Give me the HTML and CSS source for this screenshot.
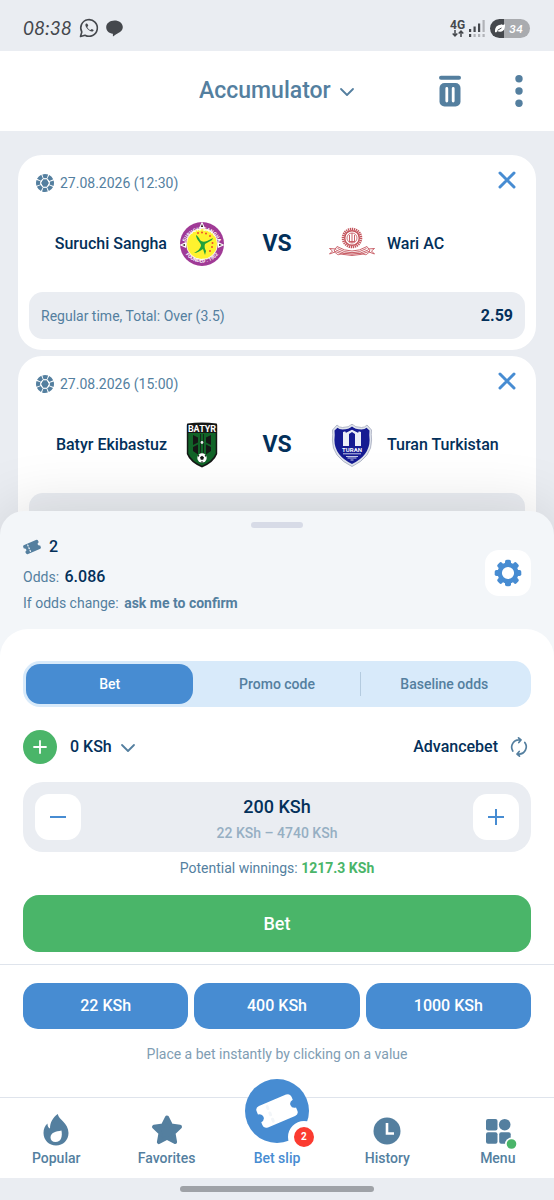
FILE: index.html
```
<!doctype html>
<html lang="en">
<head>
  <meta charset="utf-8">
  <meta name="viewport" content="width=device-width, initial-scale=1">
  <title>Bet slip</title>
  <link rel="stylesheet" href="styles.css">
</head>
<body>

  <!-- shared icons -->
  <svg class="sprite" aria-hidden="true">
    <symbol id="chevron" viewBox="0 0 16 16">
      <path d="M2 5l6 6 6-6" fill="none" stroke="currentColor" stroke-width="1.800" stroke-linecap="round" stroke-linejoin="round"/>
    </symbol>
    <symbol id="close" viewBox="0 0 18 18">
      <path d="M2 2l14 14M16 2L2 16" fill="none" stroke="currentColor" stroke-width="3" stroke-linecap="round"/>
    </symbol>
    <symbol id="ball" viewBox="0 0 18 18">
      <circle cx="9" cy="9" r="6.900" fill="none" stroke="currentColor" stroke-width="4.200" stroke-dasharray="4.500 .919" stroke-dashoffset="2.250"/>
      <path d="M7 4.800h4L13.400 9 11 13.200H7L4.600 9z" fill="currentColor" stroke="#fff" stroke-width="1"/>
    </symbol>
    <symbol id="ticket" viewBox="0 0 40 32">
      <g transform="rotate(-23 20 16)">
        <path fill="currentColor" d="M6 5h28q4 0 4 4v3q-4 .5-4 4t4 4v3q0 4-4 4H6q-4 0-4-4v-3q4-.5 4-4t-4-4V9q0-4 4-4z"/>
        <path class="perforation" d="M13 8.500v2M13 15v2M13 21.500v2" fill="none" stroke-width="2.800" stroke-linecap="round"/>
      </g>
    </symbol>
  </svg>

  <div class="status-bar">
    <div class="status-left">
      <time class="clock">08:38</time>
      <svg width="20" height="20" viewBox="0 0 20 20" fill="none" stroke="currentColor">
        <path d="M1.500 18.500l1.300-4.500a8.300 8.300 0 1 1 3.200 3.200z" stroke-width="1.600" stroke-linejoin="round"/>
        <path d="M6.800 5.800c-2.300 2.300 4.800 9.800 7.500 7.200.7-.8.4-1.300-1.600-2.100l-1.200 1.200c-1.500-.6-2.600-1.700-3.300-3.200l1.100-1.200c-.8-2-1.300-2.900-2.500-1.900z" fill="currentColor" stroke="none"/>
      </svg>
      <svg width="17" height="17" viewBox="0 0 17 17">
        <path d="M8.500.5C13 .5 16.800 3.200 16.800 7c0 4-3.300 5.200-5.300 6.500-2 1.200-3 1.800-4.500 3-.3-1 .1-1.800-.2-2.800C3 13.300.2 10.700.2 7.200.2 3.300 4 .5 8.500.5z" fill="currentColor"/>
      </svg>
    </div>
    <div class="status-right">
      <div class="network">
        <span>4G</span>
        <svg width="12" height="7" viewBox="0 0 12 7" fill="none" stroke="currentColor" stroke-width="1.500">
          <path d="M3 0v6M.7 3.500L3 6l2.300-2.500M9 7V1M6.700 3.500L9 1l2.300 2.500"/>
        </svg>
      </div>
      <svg width="16" height="17" viewBox="0 0 16 17">
        <path d="M0 9h2.200v3H0zM4.500 6.500h2.200V12H4.500zM9 3.500h2.200V12H9zM0 14h2.200v3H0z" fill="#45484d"/>
        <path d="M13.500 0h2.200v12h-2.200zM4.500 14h2.200v3H4.500zM9 14h2.200v3H9zM13.500 14h2.200v3h-2.200z" fill="#b1b3b8"/>
      </svg>
      <div class="battery">
        <svg width="10" height="9" viewBox="0 0 10 9">
          <path d="M0 8c0-4 1-6 4-7 2-.4 4 0 6-.8.2 4-1 7.300-4.500 7.500C4 7.800 3 7.500 2.500 7L1 8.500z" fill="#fff"/>
          <path d="M2.500 6.300L6.500 4" stroke="#45484d"/>
        </svg>
        <span>34</span>
      </div>
    </div>
  </div>

  <header class="header">
    <div class="picker picker-title">
      <select aria-label="Bet type"><option>Accumulator</option></select>
      <svg width="16" height="16"><use href="#chevron"/></svg>
    </div>
    <div class="header-actions">
      <button aria-label="Clear bet slip">
        <svg width="22" height="32" viewBox="0 0 22 32">
          <path d="M2 2.800h18" stroke="currentColor" stroke-width="4" stroke-linecap="round"/>
          <rect x=".5" y="8" width="21" height="23.500" rx="5" fill="currentColor"/>
          <path d="M7.800 13.500v12.500M14.200 13.500v12.500" stroke="#fff" stroke-width="2.800" stroke-linecap="round"/>
        </svg>
      </button>
      <button aria-label="More">
        <svg width="22" height="32" viewBox="0 0 22 32" fill="currentColor">
          <circle cx="11" cy="3.700" r="3.700"/><circle cx="11" cy="16" r="3.700"/><circle cx="11" cy="28.300" r="3.700"/>
        </svg>
      </button>
    </div>
  </header>

  <main class="events">
    <article class="event">
      <div class="event-head">
        <svg width="18" height="18"><use href="#ball"/></svg>
        <time>27.08.2026 (12:30)</time>
        <button class="remove" aria-label="Remove event"><svg width="18" height="18"><use href="#close"/></svg></button>
      </div>
      <div class="teams">
        <span class="team home">Suruchi Sangha</span>
        <svg viewBox="0 0 46 46">
          <circle cx="23" cy="23" r="22" fill="#a03a96"/>
          <circle cx="23" cy="23" r="15.500" fill="#fff22e" stroke="#fff" stroke-width=".8"/>
          <path id="arc-top" d="M5.800 25A17.300 17.300 0 0 1 40.200 25" fill="none"/>
          <path id="arc-bottom" d="M4.500 30A20.600 20.600 0 0 0 41.500 30" fill="none"/>
          <g fill="#fff" class="crest-text" text-anchor="middle">
            <text font-size="5"><textPath href="#arc-top" startOffset="50%">SURUCHI SANGHA</textPath></text>
            <text font-size="5"><textPath href="#arc-bottom" startOffset="50%">FOUNDED : 1952</textPath></text>
          </g>
          <path d="M23 .5l3 6.500h-6zM.5 24l6.500-3v6zM45.500 24L39 21v6z" fill="#fff"/>
          <path d="M23 3l1.200 3h-2.400zM3 24l3-1v2zM43 24l-3-1v2z" fill="#322"/>
          <path d="M17 14c2 1 3 3 4 5 2 2 4 2 7 1l6-3-1 2-7 4c-1 3 0 5 1 7l-1 4-2-6c-3 2-6 4-9 4 4-2 7-5 7-8-1-3-5-6-5-10z" fill="#20a13b"/>
          <g fill="#ef4b2d"><circle cx="19" cy="12" r="1"/><circle cx="23" cy="11.500" r="1"/><circle cx="27" cy="12.500" r="1"/><circle cx="31" cy="15" r="1"/><circle cx="33.500" cy="22" r="1"/><circle cx="33" cy="26" r="1"/><circle cx="31" cy="30" r="1"/></g>
        </svg>
        <span class="vs">VS</span>
        <svg viewBox="0 0 46 46">
          <g fill="none" stroke="#c4545c">
            <circle cx="23" cy="17" r="9" stroke-width="2.600" stroke-dasharray="1.300 .7"/>
            <circle cx="23" cy="17" r="7.300" stroke-width="1.400"/>
            <circle cx="23" cy="17" r="5" stroke-width=".8"/>
            <path d="M23 12v10M20.500 14v6M25.500 14v6M20 20.500h6" stroke-width=".9"/>
            <path d="M8 25.500q15 9 30 0l3 4.500q-18 9-36 0zM8.500 27.500q14.500 8.500 29 0M7 29q16 8.500 32 0M6 31l-5.500 2 3-3-3-2.500 6.500.5M40 31l5.500 2-3-3 3-2.500-6.500.5" stroke-width=".9"/>
            <path d="M5.500 31l3.500 2.800q14-4 28 0l3.500-2.800" stroke-width=".8"/>
          </g>
        </svg>
        <span class="team">Wari AC</span>
      </div>
      <div class="outcome"><span>Regular time, Total: Over (3.5)</span><b>2.59</b></div>
    </article>

    <article class="event">
      <div class="event-head">
        <svg width="18" height="18"><use href="#ball"/></svg>
        <time>27.08.2026 (15:00)</time>
        <button class="remove" aria-label="Remove event"><svg width="18" height="18"><use href="#close"/></svg></button>
      </div>
      <div class="teams">
        <span class="team home">Batyr Ekibastuz</span>
        <svg viewBox="0 0 46 46">
          <path d="M8.500 1.500q14.500-2 29 0 .7.200.7 2V32Q35 40.500 23 45.500 11 40.500 7.800 32V3.500q0-1.800.7-2z" fill="#151716"/>
          <path d="M9.300 11h27.400v20.500Q33 39.500 23 43.800 13 39.500 9.300 31.500z" fill="#116428"/>
          <path d="M14 13l5 2.500v5L14 23zM32 13l-5 2.500v5l5 2.500zM14 25l5-2.500v10L14 29zM32 25l-5-2.500v10l5-3.500z" fill="#151716"/>
          <path d="M21.500 12v20M24.500 12v20" stroke="#151716" stroke-width=".8"/>
          <circle cx="23" cy="20.500" r="1.400" fill="#e8efe9"/>
          <text x="23" y="9.500" font-size="9" class="crest-text" text-anchor="middle" fill="#fff">BATYR</text>
          <circle cx="23" cy="36" r="4.700" fill="#fff"/>
          <path d="M23 33.800l2 1.500-.8 2.400h-2.400l-.8-2.400zM19 33l1.500.3-1.500 2zM27 33l-1.500.3 1.500 2zM21.500 40.500L23 39l1.500 1.500z" fill="#151716"/>
        </svg>
        <span class="vs">VS</span>
        <svg viewBox="0 0 46 46">
          <path d="M23 2.200q3 3.300 9.500 3.300 3.500 0 5.500-2.500l4.500 5q-.5 4 .1 10Q43 35 23 44.500 3 35 3.400 18q.6-6 .1-10L8 3q2 2.500 5.500 2.500Q20 5.500 23 2.200z" fill="#dfe3ec" stroke="#a3a9bd" stroke-width=".8"/>
          <path d="M23 4.500q3 3 9.500 3 3.500 0 5-1.800L40.500 8.500q-.5 4 .1 9.500Q40.500 33.500 23 42 5.500 33.500 5.400 18q.6-5.500.1-9.500l3-2.800q1.500 1.800 5 1.800 6.500 0 9.500-3z" fill="#151b92"/>
          <path d="M14 10l5-1.500 4-2 4 2 5 1.500v14h-6V12l-3-2-3 2v12h-6z" fill="#eceff7"/>
          <path d="M16 9.500l7-4.500 7 4.500-1 1.200-6-3-6 3z" fill="#151b92"/>
          <text x="23" y="30" font-size="6" text-anchor="middle" fill="#fff" class="crest-text">TURAN</text>
          <path d="M14 31.800h18M17 34.500h12M18.500 36h9M21.500 38h3" stroke="#c5cae8" stroke-width="1"/>
        </svg>
        <span class="team">Turan Turkistan</span>
      </div>
      <div class="outcome"></div>
    </article>
  </main>

  <section class="sheet">
    <div class="handle"></div>
    <div class="summary">
      <div>
        <div class="count">
          <svg width="18" height="16"><use href="#ticket"/></svg>
          <span>2</span>
        </div>
        <div class="odds">Odds: <b>6.086</b></div>
        <div class="rule">If odds change: <b>ask me to confirm</b></div>
      </div>
      <button class="square" aria-label="Settings">
        <svg width="28" height="28" viewBox="-14 -14 28 28">
          <circle r="8.300" fill="none" stroke="currentColor" stroke-width="4.400"/>
          <g fill="currentColor">
            <rect id="tooth" x="-3" y="-13.300" width="6" height="5" rx="1.800"/>
            <use href="#tooth" transform="rotate(45)"/>
            <use href="#tooth" transform="rotate(90)"/>
            <use href="#tooth" transform="rotate(135)"/>
            <use href="#tooth" transform="rotate(180)"/>
            <use href="#tooth" transform="rotate(225)"/>
            <use href="#tooth" transform="rotate(270)"/>
            <use href="#tooth" transform="rotate(315)"/>
          </g>
        </svg>
      </button>
    </div>

    <div class="panel">
      <div class="tabs" role="tablist">
        <button role="tab" aria-selected="true">Bet</button>
        <button role="tab" aria-selected="false">Promo code</button>
        <button role="tab" aria-selected="false">Baseline odds</button>
      </div>

      <div class="balance">
        <button class="deposit" aria-label="Top up">
          <svg width="14" height="14" viewBox="0 0 14 14"><path d="M7 1v12M1 7h12" stroke="currentColor" stroke-width="1.800" stroke-linecap="round"/></svg>
        </button>
        <div class="picker picker-balance">
          <select aria-label="Account"><option>0 KSh</option></select>
          <svg width="16" height="16"><use href="#chevron"/></svg>
        </div>
        <button class="advance">
          Advancebet
          <svg width="18" height="20" viewBox="0 0 18 20" fill="none" stroke="currentColor" stroke-width="1.700" stroke-linecap="round" stroke-linejoin="round">
            <path d="M2.800 14A7.200 7.200 0 0 1 9.500 3h1.300M8.500.8L11 3 8.800 5.500M14.800 5.500A7.200 7.200 0 0 1 8.500 17H7.200M9.500 19.200L7 17l2.200-2.500"/>
          </svg>
        </button>
      </div>

      <div class="stake">
        <button class="square" aria-label="Decrease">
          <svg width="18" height="18" viewBox="0 0 18 18"><path d="M1 9h16" stroke="currentColor" stroke-width="2"/></svg>
        </button>
        <div class="amount">
          <input type="text" value="200 KSh" aria-label="Stake">
          <span>22 KSh – 4740 KSh</span>
        </div>
        <button class="square" aria-label="Increase">
          <svg width="18" height="18" viewBox="0 0 18 18"><path d="M1 9h16M9 1v16" stroke="currentColor" stroke-width="2"/></svg>
        </button>
      </div>
      <p class="winnings">Potential winnings: <b>1217.3 KSh</b></p>
      <button class="place">Bet</button>
    </div>

    <div class="quick">
      <div class="quick-values">
        <button>22 KSh</button>
        <button>400 KSh</button>
        <button>1000 KSh</button>
      </div>
      <p>Place a bet instantly by clicking on a value</p>
    </div>
  </section>

  <nav class="nav">
    <a href="#">
      <svg width="32" height="32" viewBox="0 0 32 32">
        <path d="M17.800 0c.6 5.500 10.700 9 10.700 19 0 7-5.500 12.500-12.500 12.500S3.500 26 3.500 19c0-4 1.500-7.500 4-9.500 0 2.500.6 4 2.500 5C10 8 13 3.500 17.800 0z" fill="currentColor"/>
        <path d="M21.500 16.500c1 6-.2 11.500-6 11.500-3.200 0-5-2-5-4.600 0-4.900 5.500-5.900 11-6.900z" fill="#fff"/>
      </svg>
      Popular
    </a>
    <a href="#">
      <svg width="32" height="32" viewBox="0 0 32 32">
        <path d="M16 3.500l4 8 9 1.300-6.500 6.300 1.600 9L16 23.800 7.900 28.100l1.600-9L3 12.800l9-1.300z" fill="currentColor" stroke="currentColor" stroke-width="4" stroke-linejoin="round"/>
      </svg>
      Favorites
    </a>
    <a href="#" class="active">
      <span class="slip">
        <svg width="42" height="34"><use href="#ticket"/></svg>
        <span class="badge">2</span>
      </span>
      Bet slip
    </a>
    <a href="#">
      <svg width="32" height="32" viewBox="0 0 32 32">
        <circle cx="16" cy="17" r="13.500" fill="currentColor"/>
        <path d="M16 9v10.500h7" fill="none" stroke="#fff" stroke-width="2.600"/>
      </svg>
      History
    </a>
    <a href="#">
      <svg width="38" height="32" viewBox="-3 0 38 32">
        <g fill="currentColor">
          <rect x="4" y="5" width="11.500" height="11.500" rx="2"/>
          <circle cx="22.700" cy="10.700" r="5.800"/>
          <rect x="4" y="18.300" width="11.500" height="11.500" rx="2"/>
          <rect x="17.200" y="18.300" width="11.500" height="11.500" rx="2"/>
        </g>
        <circle cx="29.500" cy="30" r="6.500" fill="#fff"/>
        <circle cx="29.500" cy="30" r="4.800" fill="#4ab569"/>
      </svg>
      Menu
    </a>
  </nav>
  <div class="gesture"><span></span></div>

</body>
</html>
```
FILE: styles.css
```
* {
  box-sizing: border-box;
}

body {
  --slate: #547f9f;
  --navy: #03305a;
  --blue: #478cd2;
  --green: #4ab569;
  --bg: #eaedf2;
  --line: #dfe4ec;
  margin: 0;
  height: 100vh;
  display: flex;
  flex-direction: column;
  background: var(--bg);
  color: var(--slate);
  font: 14px/20px Roboto, "Liberation Sans", sans-serif;
}

button, select, input {
  margin: 0;
  padding: 0;
  border: 0;
  background: none;
  color: inherit;
  font: inherit;
}

button {
  display: flex;
  align-items: center;
  justify-content: center;
}

p {
  margin: 0;
}

svg {
  display: block;
  flex: none;
  overflow: visible;
}

.sprite {
  position: absolute;
  width: 0;
  height: 0;
}

/* phone status bar */

.status-bar {
  display: flex;
  justify-content: space-between;
  align-items: center;
  padding: 17px 24px 12px 23px;
  color: #45484d;
}

.status-left, .status-right {
  display: flex;
  align-items: center;
}

.status-left {
  gap: 7px;
}

.status-right {
  gap: 4px;
}

.clock {
  font: italic 19px/22px Lato, sans-serif;
}

.network {
  display: flex;
  flex-direction: column;
  align-items: center;
  font-size: 12px;
  line-height: 10px;
  font-weight: 700;
}

.battery {
  display: flex;
  align-items: center;
  gap: 4px;
  height: 19px;
  margin-left: 1px;
  padding: 0 7px 0 5px;
  border-radius: 10px;
  background: linear-gradient(90deg, #45484d 34%, #a9abaf 34%);
  color: #fff;
  font: italic 700 12px/19px Lato, sans-serif;
}

/* header */

.header {
  display: grid;
  grid-template-columns: 1fr auto 1fr;
  align-items: center;
  padding: 24px;
  background: #fff;
}

.picker {
  position: relative;
}

.picker select {
  appearance: none;
  outline: 0;
}

.picker svg {
  position: absolute;
  right: 0;
  top: 50%;
  margin-top: -7px;
  pointer-events: none;
}

.picker-title {
  grid-column: 2;
  font-size: 23px;
  line-height: 32px;
  font-weight: 500;
}

.picker-title select {
  padding-right: 24px;
}

.header-actions {
  display: flex;
  justify-content: flex-end;
  gap: 47px;
}

/* events */

.events {
  flex: 1;
  min-height: 0;
  overflow: hidden;
  padding: 24px 18px 0;
}

.event {
  margin-bottom: 6px;
  padding: 11px;
  border-radius: 24px;
  background: #fff;
}

.event-head {
  display: flex;
  align-items: center;
  gap: 6px;
  height: 34px;
  padding: 0 4px 0 7px;
}

.remove {
  align-self: flex-start;
  width: 28px;
  height: 28px;
  margin-left: auto;
  color: var(--blue);
}

.teams {
  display: grid;
  grid-template-columns: 1fr 46px 80px 46px 1fr;
  align-items: center;
  gap: 12px;
  height: 46px;
  margin: 21px 0 25px;
  color: var(--navy);
}

.team {
  font-size: 16px;
  font-weight: 500;
}

.home {
  text-align: right;
}

.vs {
  text-align: center;
  font-size: 23px;
  font-weight: 700;
}

.crest-text {
  font-family: Roboto, sans-serif;
  font-weight: 700;
}

.outcome {
  display: flex;
  align-items: center;
  justify-content: space-between;
  min-height: 47px;
  padding: 0 12px;
  border-radius: 14px;
  background: var(--bg);
}

.outcome b {
  color: var(--navy);
  font-size: 16px;
}

/* bottom sheet */

.sheet {
  position: relative;
  margin-top: -24px;
  padding-top: 11px;
  border-radius: 24px 24px 0 0;
  background: #f3f6f9;
  box-shadow: 0 0 64px rgba(0, 0, 0, .14);
}

.handle {
  width: 52px;
  height: 6px;
  margin: 0 auto 5px;
  border-radius: 3px;
  background: #d7dbe7;
}

.summary {
  display: flex;
  align-items: center;
  justify-content: space-between;
  padding: 0 23px 16px;
}

.count, .odds b {
  color: var(--navy);
  font-size: 16px;
  font-weight: 500;
}

.count {
  display: flex;
  align-items: center;
  gap: 8px;
  height: 28px;
}

.count svg {
  color: var(--slate);
}

.perforation {
  stroke: #f3f6f9;
}

.odds {
  height: 32px;
  line-height: 32px;
}

.odds b, .rule b {
  margin-left: 2px;
}

.square {
  width: 46px;
  height: 46px;
  border-radius: 14px;
  background: #fff;
  color: var(--blue);
}

.panel {
  padding: 32px 23px 12px;
  border-radius: 28px 28px 0 0;
  background: #fff;
}

.tabs {
  display: grid;
  grid-template-columns: repeat(3, 1fr);
  padding: 3px;
  border-radius: 17px;
  background: #d8eafa;
}

.tabs button {
  position: relative;
  height: 40px;
  border-radius: 14px;
  font-weight: 500;
}

.tabs [aria-selected="true"] {
  background: var(--blue);
  color: #fff;
}

.tabs button:last-child::before {
  content: "";
  position: absolute;
  left: -1px;
  top: 8px;
  bottom: 8px;
  width: 1px;
  background: #b4cbdf;
}

.balance {
  display: flex;
  align-items: center;
  margin: 23px 0 18px;
  color: var(--navy);
  font-size: 16px;
  font-weight: 500;
}

.deposit {
  width: 34px;
  height: 34px;
  margin-right: 13px;
  border-radius: 50%;
  background: var(--green);
  color: #fff;
}

.picker-balance select {
  padding-right: 24px;
}

.balance .picker svg, .advance svg {
  color: var(--slate);
}

.advance {
  gap: 12px;
  margin-left: auto;
  padding-right: 3px;
}

.stake {
  display: flex;
  align-items: center;
  justify-content: space-between;
  padding: 10px 12px;
  border-radius: 20px;
  background: var(--bg);
}

.amount {
  flex: 1;
  min-width: 0;
  color: #96afc3;
  line-height: 18px;
  font-weight: 500;
  text-align: center;
}

.amount input {
  display: block;
  width: 100%;
  height: 28px;
  color: var(--navy);
  font-size: 18px;
  text-align: center;
}

.amount span {
  display: block;
  margin-top: 4px;
}

.winnings {
  margin: 6px 0 17px;
  text-align: center;
}

.winnings b {
  color: var(--green);
}

.place {
  width: 100%;
  height: 57px;
  border-radius: 16px;
  background: var(--green);
  color: #fff;
  font-size: 18px;
  font-weight: 500;
}

.quick {
  padding: 18px 23px 33px;
  border-top: 1px solid var(--line);
  background: #fff;
  color: #809db3;
  text-align: center;
}

.quick-values {
  display: grid;
  grid-template-columns: repeat(3, 1fr);
  gap: 6px;
  margin-bottom: 15px;
}

.quick-values button {
  height: 46px;
  border-radius: 15px;
  background: var(--blue);
  color: #fff;
  font-size: 16px;
  font-weight: 500;
}

/* bottom navigation */

.nav {
  position: relative;
  display: grid;
  grid-template-columns: repeat(5, 1fr);
  padding: 16px 1px 10px;
  border-top: 1px solid var(--line);
  background: #fff;
}

.nav a {
  position: relative;
  display: flex;
  flex-direction: column;
  align-items: center;
  justify-content: flex-end;
  gap: 2px;
  color: var(--slate);
  font-weight: 500;
  text-decoration: none;
}

.nav .active {
  color: var(--blue);
}

/* the round button rises above the bar */
.slip {
  position: absolute;
  bottom: 25px;
  left: 50%;
  display: flex;
  align-items: center;
  justify-content: center;
  width: 64px;
  height: 64px;
  margin-left: -32px;
  border-radius: 50%;
  background: var(--blue);
  color: #fff;
}

.slip .perforation {
  stroke: var(--blue);
}

.badge {
  position: absolute;
  right: -11px;
  bottom: -10px;
  width: 32px;
  height: 32px;
  border: 6px solid #fff;
  border-radius: 50%;
  background: #fb3b30;
  font-size: 10px;
  font-weight: 700;
  text-align: center;
}

.gesture {
  padding: 8px 0;
}

.gesture span {
  display: block;
  width: 35%;
  height: 6px;
  margin: 0 auto;
  border-radius: 3px;
  background: #9fa2a7;
}
```
